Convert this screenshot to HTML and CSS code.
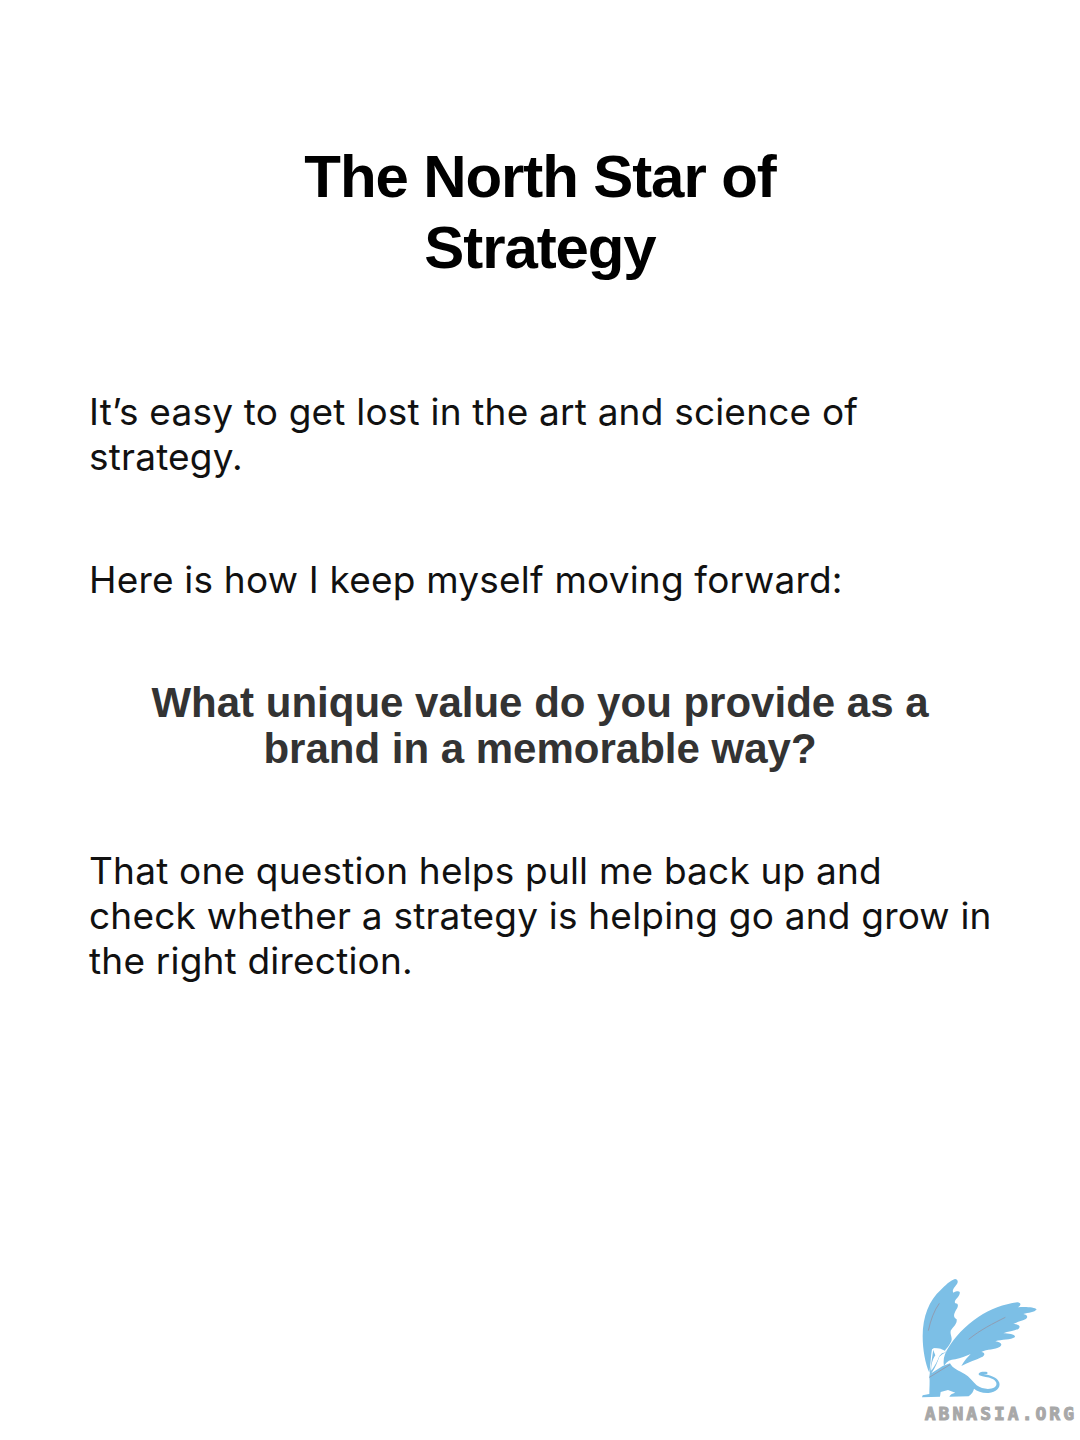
FILE: index.html
```html
<!DOCTYPE html>
<html lang="en">
<head>
    <meta charset="UTF-8">
    <title>The North Star of Strategy</title>
    <link rel="stylesheet" href="styles.css">
</head>
<body>
    <div class="slide">
        <h1>The North Star of<br>Strategy</h1>
        <p class="intro">It’s easy to get lost in the art and science of<br>strategy.</p>
        <p class="lead">Here is how I keep myself moving forward:</p>
        <h2>What unique value do you provide as a<br>brand in a memorable way?</h2>
        <p class="outro">That one question helps pull me back up and<br>check whether a strategy is helping go and grow in<br>the right direction.</p>

        <div class="logo">
            <svg class="griffin" width="180" height="142" viewBox="0 0 540 426">
                <!-- left wing -->
                <path fill="#7cbfe6" d="M165 57 C175 58 176 68 168 76 C160 86 156 92 160 98 C172 92 184 92 178 104 C172 116 160 122 166 130 C176 130 176 140 168 150 C160 164 160 172 170 178 C172 192 160 200 152 212 C150 226 158 232 154 244 C148 256 142 264 134 272 C120 262 108 262 96 268 C92 290 92 312 88 338 C76 310 68 270 68 228 C68 170 88 120 122 90 C136 76 150 62 165 57 Z"/>
                <!-- right wing -->
                <path fill="#7cbfe6" d="M352 127 C364 128 364 136 354 142 C378 140 404 142 410 148 C404 158 385 158 370 162 C382 164 386 172 376 178 C364 184 350 186 340 192 C354 192 364 198 356 206 C344 214 324 214 310 220 C326 220 350 224 344 232 C334 240 304 238 286 244 C300 246 310 252 300 260 C284 270 262 266 244 276 C256 278 256 286 244 292 C228 300 208 306 184 318 C194 300 204 290 212 282 C198 288 182 294 166 298 C150 300 142 302 132 318 C128 298 134 280 146 262 C160 236 196 196 236 170 C270 148 312 132 352 127 Z"/>
                <!-- body -->
                <path fill="#7cbfe6" d="M100 268 C108 264 120 264 130 268 L140 276 L128 282 L118 290 C112 306 108 320 94 340 L128 318 L150 310 C158 326 176 332 194 342 C208 350 218 364 230 376 C246 388 270 390 284 382 C294 374 290 362 276 356 C264 350 250 352 238 346 C232 340 240 333 262 336 L262 342 L250 343 C270 345 292 352 298 368 C302 384 288 396 266 399 C246 400 232 394 222 386 C220 394 216 402 206 409 L148 410 C150 404 156 400 166 398 L144 390 L122 396 L120 410 L66 412 L68 406 L88 402 C88 384 90 364 88 350 C92 320 96 296 100 268 Z"/>
                <!-- white head and feather lines -->
                <path fill="#ffffff" d="M98 266 C108 264 124 264 140 276 L126 280 L118 288 C112 304 106 316 94 332 C92 316 98 298 106 286 Z"/>
                <path fill="none" stroke="#8f9db3" stroke-width="3" d="M88 352 L150 314 M206 238 C240 210 280 190 316 172 M85 212 C92 180 102 152 118 130"/>
            </svg>
            <span class="logo-text">ABNASIA.ORG</span>
        </div>
    </div>
</body>
</html>
```

FILE: styles.css
```css
body {
    margin: 0;
    background: #fff;
    color: #000;
    font-family: "Inter", sans-serif;
}
.slide {
    box-sizing: border-box;
    width: 1080px;
    height: 1440px;
    padding: 141px 5px 0 89px;
    display: flex;
    flex-direction: column;
}
h1 {
    margin: 0 84px 0 0;
    text-align: center;
    font-family: "Liberation Sans", sans-serif;
    font-size: 60px;
    line-height: 71px;
    font-weight: bold;
    letter-spacing: -1.1px;
}
p {
    margin: 0;
    font-size: 37px;
    line-height: 45px;
    letter-spacing: 0.2px;
    color: #111;
}
.intro {
    margin-top: 106px;
}
.lead {
    margin-top: 78px;
}
h2 {
    margin: 78px 84px 0 0;
    text-align: center;
    font-family: "Liberation Sans", sans-serif;
    font-size: 42px;
    line-height: 46px;
    font-weight: bold;
    color: #333;
}
.outro {
    margin-top: 76px;
}
.logo {
    margin-top: auto;
    margin-right: -5px;
    margin-bottom: 15px;
    align-self: flex-end;
    display: flex;
    flex-direction: column;
    align-items: flex-end;
}
.griffin {
    display: block;
    margin-bottom: 1px;
}
.logo-text {
    margin-right: 3px;
    font-family: "DejaVu Sans Mono", monospace;
    font-size: 18px;
    line-height: 22px;
    font-weight: bold;
    letter-spacing: 3px;
    color: #a8a8a8;
    -webkit-text-stroke: 1px #a8a8a8;
}
```
